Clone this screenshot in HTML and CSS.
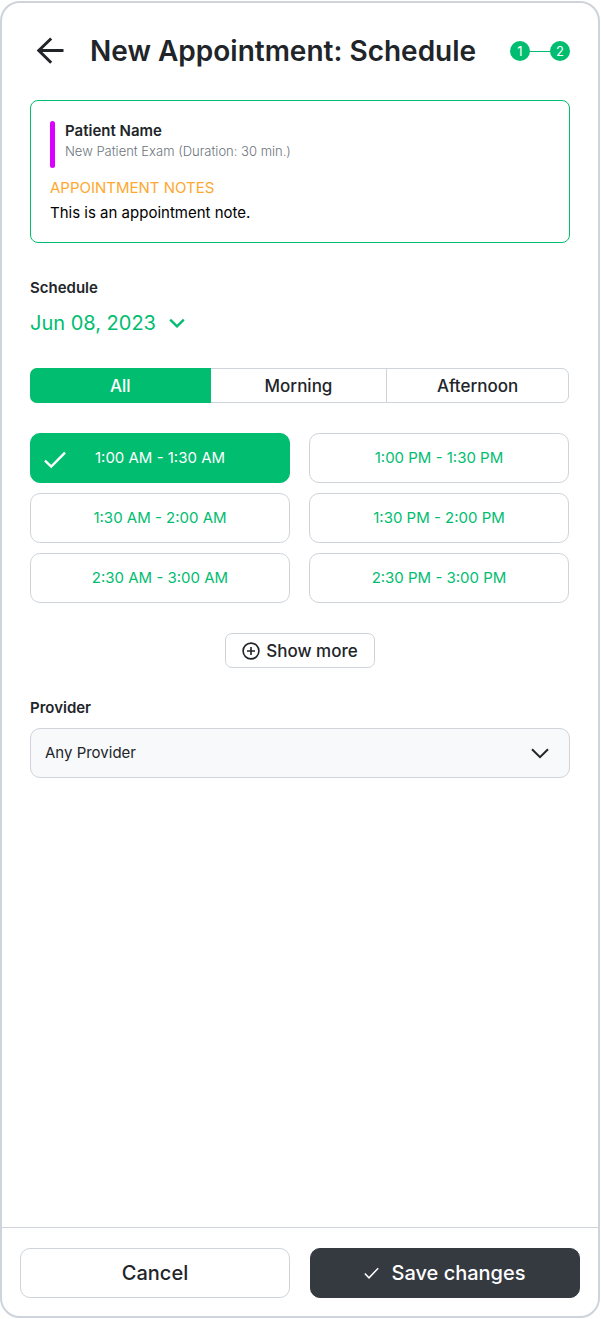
FILE: index.html
```html
<!DOCTYPE html>
<html lang="en">
<head>
<meta charset="utf-8">
<meta name="viewport" content="width=device-width, initial-scale=1">
<title>New Appointment: Schedule</title>
<link rel="stylesheet" href="styles.css">
</head>
<body>
<div class="sheet">
  <header class="header">
    <button class="back" type="button" aria-label="Back">
      <svg width="28" height="28" viewBox="0 0 28 28" fill="none" stroke="currentColor" stroke-width="3"><path d="M27.5 13.5H2.5M15.2 1.5L2.8 13.5L15.2 25.8"/></svg>
    </button>
    <h1 class="title">New Appointment: Schedule</h1>
    <ol class="steps">
      <li class="step">1</li>
      <li class="step">2</li>
    </ol>
  </header>

  <main class="content">
    <section class="patient">
      <div class="patient-head">
        <div class="patient-name">Patient Name</div>
        <div class="patient-exam">New Patient Exam (Duration: 30 min.)</div>
      </div>
      <div class="notes-title">APPOINTMENT NOTES</div>
      <p class="notes-text">This is an appointment note.</p>
    </section>

    <section class="schedule">
      <h2 class="label">Schedule</h2>
      <button class="date" type="button">Jun 08, 2023
        <svg width="16" height="10" viewBox="0 0 16 10" fill="none" stroke="currentColor" stroke-width="2.4"><path d="M1.2 1.7L8 8.3L14.8 1.7"/></svg>
      </button>
      <div class="tabs">
        <button class="tab tab-active" type="button">All</button>
        <button class="tab tab-middle" type="button">Morning</button>
        <button class="tab" type="button">Afternoon</button>
      </div>
      <div class="slots">
        <button class="slot slot-active" type="button">
          <svg class="slot-check" width="22" height="18" viewBox="0 0 22 18" fill="none" stroke="currentColor" stroke-width="2.4"><path d="M1 9.7L7.2 15.6L21 1.6"/></svg>1:00 AM - 1:30 AM</button>
        <button class="slot" type="button">1:00 PM - 1:30 PM</button>
        <button class="slot" type="button">1:30 AM - 2:00 AM</button>
        <button class="slot" type="button">1:30 PM - 2:00 PM</button>
        <button class="slot" type="button">2:30 AM - 3:00 AM</button>
        <button class="slot" type="button">2:30 PM - 3:00 PM</button>
      </div>
      <button class="more" type="button">
        <svg width="18" height="18" viewBox="0 0 18 18" fill="none" stroke="currentColor" stroke-width="1.6"><circle cx="9" cy="9" r="7.9"/><path d="M9 5V13M5 9H13"/></svg>
        Show more
      </button>
    </section>

    <section class="provider">
      <label class="label" for="provider">Provider</label>
      <div class="select-wrap">
        <select class="select" id="provider"><option>Any Provider</option></select>
        <svg class="select-arrow" width="18" height="11" viewBox="0 0 18 11" fill="none" stroke="currentColor" stroke-width="2"><path d="M1 1.2L9 9.2L17 1.2"/></svg>
      </div>
    </section>
  </main>

  <footer class="footer">
    <button class="action" type="button">Cancel</button>
    <button class="action action-primary" type="button">
      <svg width="15" height="12" viewBox="0 0 15 12" fill="none" stroke="currentColor" stroke-width="1.5"><path d="M0.8 6.5L5 10.8L14.2 1.2"/></svg>
      Save changes
    </button>
  </footer>
</div>
</body>
</html>
```
FILE: styles.css
```css
* {
  box-sizing: border-box;
}

body {
  margin: 0;
  padding: 1px 1px 1px 0;
  background: #fff;
  color: #212529;
  font-family: Inter, "Liberation Sans", sans-serif;
  font-size: 15px;
  line-height: 20px;
}

button,
select {
  margin: 0;
  padding: 0;
  border: 0;
  background: none;
  color: inherit;
  font: inherit;
  cursor: pointer;
}

svg {
  display: block;
  flex: none;
}

.sheet {
  display: flex;
  flex-direction: column;
  min-height: calc(100vh - 2px);
  border: 2px solid #ced4da;
  border-radius: 20px;
}

.header {
  display: flex;
  align-items: center;
  padding: 28px 28px 0 34px;
}

.title {
  flex: 1;
  margin: 0 0 0 26px;
  font-size: 28px;
  line-height: 40px;
  font-weight: 600;
}

.steps {
  display: flex;
  align-items: center;
  gap: 20px;
  margin: 0;
  padding: 0;
  list-style: none;
  background: linear-gradient(#00bd70, #00bd70) center / 100% 1px no-repeat;
}

.step {
  width: 20px;
  height: 20px;
  border-radius: 50%;
  background: #00bd70;
  color: #fff;
  font-size: 13px;
  text-align: center;
}

.content {
  flex: 1;
  padding: 29px 28px 40px;
}

.patient {
  padding: 20px 19px 19px;
  border: 1px solid #00bd70;
  border-radius: 8px;
}

.patient-head {
  position: relative;
  height: 47px;
  padding-left: 15px;
}

.patient-head::before {
  content: "";
  position: absolute;
  left: 0;
  top: 0;
  width: 5px;
  height: 100%;
  border-radius: 3px;
  background: #d900ff;
}

.patient-name {
  font-weight: 600;
}

.patient-exam {
  color: #6c757d;
  font-size: 13px;
  font-weight: 300;
}

.notes-title {
  margin-top: 10px;
  color: #fda831;
}

.notes-text {
  margin: 5px 0 0;
  color: #000;
}

.schedule {
  display: flex;
  flex-direction: column;
  margin-top: 35px;
}

.label {
  display: block;
  margin: 0;
  font-size: 15px;
  line-height: 20px;
  font-weight: 600;
}

.date {
  display: flex;
  align-items: center;
  align-self: flex-start;
  gap: 13px;
  margin-top: 13px;
  color: #00bd70;
  font-size: 20px;
  line-height: 24px;
}

.tabs {
  display: flex;
  height: 35px;
  margin: 33px 1px 0 0;
  border: 1px solid #ced4da;
  border-radius: 7px;
}

.tab {
  flex: 181;
  font-size: 17px;
  font-weight: 500;
}

.tab-middle {
  flex: 176;
  border-right: 1px solid #ced4da;
}

.tab-active {
  margin: -1px 0 -1px -1px;
  border-radius: 7px 0 0 7px;
  background: #00bd70;
  color: #fff;
}

.slots {
  display: grid;
  grid-template-columns: 1fr 1fr;
  gap: 10px 19px;
  margin: 30px 1px 0 0;
}

.slot {
  position: relative;
  height: 50px;
  border: 1px solid #ced4da;
  border-radius: 10px;
  color: #00bd70;
}

.slot-active {
  border-color: #00bd70;
  background: #00bd70;
  color: #fff;
}

.slot-check {
  position: absolute;
  left: 13px;
  top: 17px;
}

.more {
  display: flex;
  align-items: center;
  align-self: center;
  gap: 6px;
  height: 35px;
  margin-top: 30px;
  padding: 0 16px;
  border: 1px solid #ced4da;
  border-radius: 7px;
  font-size: 17px;
  font-weight: 500;
}

.provider {
  margin-top: 30px;
}

.select-wrap {
  position: relative;
  margin-top: 10px;
}

.select {
  display: block;
  width: 100%;
  height: 50px;
  padding: 0 14px;
  border: 1px solid #ced4da;
  border-radius: 10px;
  background: #f8f9fb;
  appearance: none;
}

.select-arrow {
  position: absolute;
  right: 21px;
  top: 20px;
  pointer-events: none;
}

.footer {
  display: grid;
  grid-template-columns: 1fr 1fr;
  gap: 20px;
  padding: 20px 18px 18px;
  border-top: 1px solid #ced4da;
}

.action {
  display: flex;
  align-items: center;
  justify-content: center;
  gap: 12px;
  height: 50px;
  border: 1px solid #ced4da;
  border-radius: 10px;
  font-size: 20px;
  font-weight: 500;
}

.action-primary {
  border-color: #343a40;
  background: #353940;
  color: #fff;
}
```
